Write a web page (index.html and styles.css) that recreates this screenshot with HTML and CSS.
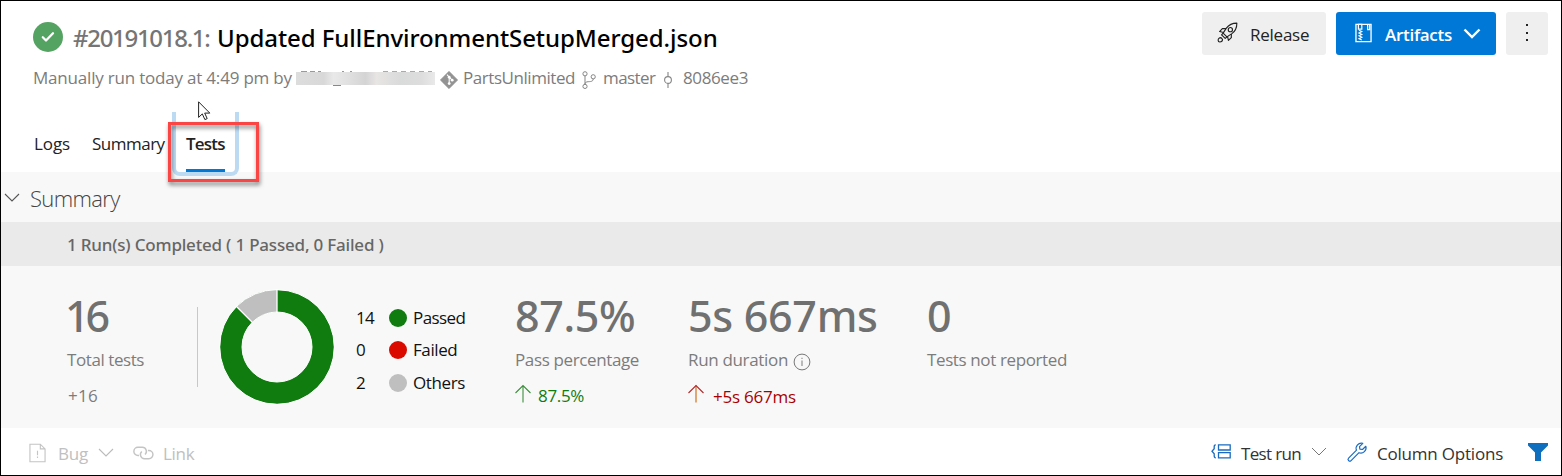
FILE: index.html
```html
<!DOCTYPE html>
<html lang="en">
<head>
<meta charset="utf-8">
<title>Pipeline run - Tests</title>
<link rel="stylesheet" href="styles.css">
</head>
<body>
<header class="header">
  <div class="run">
    <div class="title-row">
      <svg class="status" viewBox="0 0 30 30"><circle cx="15" cy="15" r="15" fill="#55a362"/><path d="M9.800 15.300l3.200 3.200 7-7.200" fill="none" stroke="#fff" stroke-width="2.300" stroke-linecap="round" stroke-linejoin="round"/></svg>
      <h1 class="title"><span class="run-id">#20191018.1:</span><span class="run-name">Updated FullEnvironmentSetupMerged.json</span></h1>
    </div>
    <div class="meta">
      <span class="meta-by">Manually run today at 4:49 pm by</span>
      <span class="redacted"></span>
      <svg class="ico-git" viewBox="0 0 18 18"><path d="M9 .3L17.7 9 9 17.7.3 9z" fill="#939393" stroke="#939393" stroke-linejoin="round" stroke-width=".6"/><path d="M7 3.6l2.2 2.6v6.6M9.2 6.2l3 3" fill="none" stroke="#fff" stroke-width="1.1"/><circle cx="9.2" cy="6.2" r="1.4" fill="#fff"/><circle cx="9.2" cy="12.6" r="1.4" fill="#fff"/><circle cx="12.2" cy="9.2" r="1.4" fill="#fff"/></svg>
      <span class="meta-repo">PartsUnlimited</span>
      <svg class="ico-branch" viewBox="0 0 14 18"><g fill="none" stroke="#858585" stroke-width="1"><circle cx="3" cy="2.8" r="2.1"/><circle cx="3" cy="15.4" r="2.1"/><circle cx="11.2" cy="5.8" r="2.1"/><path d="M3 4.9v8.4M11.2 7.9c0 3-3.2 2.6-5.2 2.8-2 .2-3 .8-3 2.6"/></g></svg>
      <span class="meta-branch">master</span>
      <svg class="ico-commit" viewBox="0 0 10 18"><g fill="none" stroke="#858585" stroke-width="1.1"><circle cx="5" cy="9" r="3.4"/><path d="M5 1v4.600M5 12.400V17"/></g></svg>
      <span class="meta-commit">8086ee3</span>
    </div>
  </div>
  <div class="actions">
    <button class="btn btn-release">
      <svg class="ico-rocket" viewBox="0 0 22 22"><g fill="none" stroke="#222" stroke-width="1.2" stroke-linejoin="round"><path d="M20.800 1.200c-4.400 0-8.300 1.600-11 5.200L6.400 11.600l4 4 5.200-3.400c3.600-2.700 5.200-6.600 5.200-11z"/><circle cx="14" cy="8" r="2.200"/><path d="M9.400 7H5.600L2.700 10l4.200 1M15 12.600v3.800L12 19.300l-1-4.200M6.400 11.600l-1.600 1.800 3.800 3.800 1.800-1.600"/><path d="M4.200 16.400c-2 0-3 1.200-3 2.700 0 1 .6 1.800 1.700 1.800 1.700 0 2.900-1 2.900-2.800z"/></g></svg>
      <span class="release-label">Release</span>
    </button>
    <button class="btn btn-artifacts">
      <svg class="ico-zip" viewBox="0 0 18 20"><path d="M1 .8h16v18.400H1z" fill="none" stroke="#fff" stroke-width="1.400"/><path d="M3.600.8h3.600v5H3.600zM13.400 1v5.500h2.200V1" fill="none" stroke="#fff" stroke-width="1.300"/><path d="M4.200 7l3 1.500-3 1.500 3 1.500-3 1.500 3 1.500-3 1.500 3 1.500" fill="none" stroke="#fff" stroke-width="1.200"/></svg>
      <span class="artifacts-label">Artifacts</span>
      <svg class="ico-chev" viewBox="0 0 18 12"><path d="M1.500 1.500L9 9l7.500-7.500" fill="none" stroke="#fff" stroke-width="2.400"/></svg>
    </button>
    <button class="btn btn-more"><svg class="ico-more" viewBox="0 0 4 20"><path d="M1 2h2v2H1zM1 10h2v2H1zM1 17h2v2H1z" fill="#222"/></svg></button>
  </div>
</header>
<nav class="tabs">
  <span class="tab tab-logs">Logs</span>
  <span class="tab tab-summary">Summary</span>
  <span class="tab tab-tests">Tests<i class="focus-ring"></i><i class="callout"></i></span>
</nav>
<main>
  <section class="summary-head">
    <svg class="ico-collapse" viewBox="0 0 16 10"><path d="M1 1l7 7 7-7" fill="none" stroke="#555" stroke-width="1.100"/></svg>
    <h2 class="summary-title">Summary</h2>
  </section>
  <section class="completed"><span class="completed-text">1 Run(s) Completed ( 1 Passed, 0 Failed )</span></section>
  <section class="stats">
    <div class="stat stat-total">
      <div class="num num-total">16</div>
      <div class="label label-total">Total tests</div>
      <div class="delta delta-total">+16</div>
    </div>
    <div class="divider"></div>
    <svg class="donut" viewBox="-58 -58 116 116">
      <circle r="46" fill="none" stroke="#107c10" stroke-width="22"/>
      <path d="M0 -46A46 46 0 0 0 -32.530 -32.530" fill="none" stroke="#bfbfbf" stroke-width="22"/>
      <path d="M0 -58V-34M-41 -41L-24 -24" stroke="#fff" stroke-width="1.300"/>
      <circle r="35" fill="none" stroke="#fff" stroke-width="1"/><circle r="57.300" fill="none" stroke="#fff" stroke-width="1"/>
    </svg>
    <div class="legend">
      <span class="count count-passed">14</span><i class="dot passed"></i><span class="leg-passed">Passed</span>
      <span class="count">0</span><i class="dot failed"></i><span class="leg-failed">Failed</span>
      <span class="count">2</span><i class="dot others"></i><span class="leg-others">Others</span>
    </div>
    <div class="stat">
      <div class="num num-pass">87.5%</div>
      <div class="label label-pass">Pass percentage</div>
      <div class="delta good"><svg class="arrow" viewBox="0 0 18 20"><path d="M9 18.500V1.500M1.500 9L9 1.500 16.500 9" fill="none" stroke="#3d8f3d" stroke-width="1.100"/></svg><span class="delta-pass">87.5%</span></div>
    </div>
    <div class="stat">
      <div class="num num-dur">5s 667ms</div>
      <div class="label"><span class="label-dur">Run duration</span><svg class="ico-info" viewBox="0 0 18 18"><circle cx="9" cy="9" r="7.900" fill="none" stroke="#777" stroke-width="1"/><path d="M9 7.500v5.500M9 4.800v1.300" stroke="#888" stroke-width="1.100"/></svg></div>
      <div class="delta bad"><svg class="arrow" viewBox="0 0 18 20"><path d="M9 18.500V1.500" stroke="#d0701c" stroke-width="1.200"/><path d="M1.500 9L9 1.500 16.500 9" fill="none" stroke="#b02a2a" stroke-width="1.100"/></svg><span class="delta-dur">+5s 667ms</span></div>
    </div>
    <div class="stat">
      <div class="num">0</div>
      <div class="label label-not">Tests not reported</div>
    </div>
  </section>
</main>
<footer class="toolbar">
  <svg class="ico-bug" viewBox="0 0 18 20"><path d="M1 .7h11l5 5v13.600H1zM12 .7v5h5" fill="none" stroke="#c4c4c4" stroke-width="1.200"/><path d="M9 7.500v5M9 13.700v1.500" stroke="#c4c4c4" stroke-width="1.200"/></svg>
  <span class="bug">Bug</span>
  <svg class="ico-down down-bug" viewBox="0 0 16 10"><path d="M1 1l7 7 7-7" fill="none" stroke="#bbb" stroke-width="1.100"/></svg>
  <svg class="ico-link" viewBox="0 0 22 14"><g fill="none" stroke="#c4c4c4" stroke-width="1.500"><path d="M6.300 9.600H5.200a4.300 4.300 0 0 1 0-8.600h4.600a4.300 4.300 0 0 1 2.800 7.500"/><path d="M15.600 4.400h1a4.300 4.300 0 0 1 0 8.600H12a4.300 4.300 0 0 1-2.800-7.500"/></g></svg>
  <span class="link">Link</span>
  <span class="spacer"></span>
  <svg class="ico-group" viewBox="0 0 20 15"><g fill="none" stroke="#1a6bc0" stroke-width="1.300"><path d="M7.500.8h11.700v5.200H7.500zM7.500 8.700h11.700v5.200H7.500zM4.800.8C3.400.8 3.200 1.500 3.200 2.800v2L1 7.300l2.200 2.500v2c0 1.300.2 2 1.600 2"/></g></svg>
  <span class="testrun">Test run</span>
  <svg class="ico-down down-run" viewBox="0 0 16 10"><path d="M1 1l7 7 7-7" fill="none" stroke="#777" stroke-width="1"/></svg>
  <svg class="ico-wrench" viewBox="0 0 20 20"><path d="M15.800 1.300a5.200 5.200 0 0 0-6.300 6.900l-7.900 7.900a1.750 1.750 0 0 0 2.500 2.500l7.900-7.900a5.200 5.200 0 0 0 6.800-6.400l-3.300 3.200-2.600-.3-.4-2.600z" fill="none" stroke="#1a6bc0" stroke-width="1.200" stroke-linejoin="round"/></svg>
  <span class="columns">Column Options</span>
  <svg class="ico-filter" viewBox="0 0 20 18"><path d="M0 0h20v2.500l-7 7V18H7V9.500l-7-7z" fill="#106ebe"/></svg>
</footer>
<svg class="cursor" viewBox="0 0 13 20"><path d="M.6.8v15.600l3.700-3.500 2.600 5.700 2.300-1-2.500-5.500h5.100z" fill="#fff" stroke="#222" stroke-width="1"/></svg>
</body>
</html>
```
FILE: styles.css
```css
* { box-sizing: border-box; }
body {
  margin: 0;
  width: 1562px;
  height: 476px;
  border: 1px solid #000;
  background: #fff;
  color: #222;
  font: 400 17px/24px "Open Sans", "Noto Sans", sans-serif;
  white-space: nowrap;
  position: relative;
  overflow: hidden;
}
svg { display: block; flex: none; overflow: visible; }
h1, h2 { margin: 0; }

.header { display: flex; justify-content: space-between; height: 111px; padding: 11px 13px 0 32px; }
.title-row { display: flex; height: 50px; padding-top: 10px; }
.status { width: 30px; height: 30px; margin-right: 10px; }
.title { display: flex; font-family: "Noto Sans", "Open Sans", sans-serif; font-size: 24px; line-height: 32px; }
.run-id { width: 144px; font-weight: 500; color: #757575; letter-spacing: -1.3px; }
.run-name { font-weight: 500; color: #000; letter-spacing: -.07px; }
.meta { display: flex; align-items: center; height: 32px; color: #7c7c7c; }
.meta-by { width: 263px; letter-spacing: -.2px; }
.redacted {
  width: 139px;
  height: 15px;
  margin: 1px 5px 0 0;
  background:
    linear-gradient(#888, #888) 37px 14px / 8px 1px no-repeat,
    linear-gradient(90deg, #999 6px, transparent 6px 9px, #999 9px 14px, transparent 14px 17px, #999 17px 20px, transparent 20px) 5px 0 / 30px 1px no-repeat,
    linear-gradient(90deg, #999 2px, transparent 2px 8px, #999 8px 10px, transparent 10px) 46px 0 / 20px 1px no-repeat,
    repeating-linear-gradient(90deg, #aaa 0 5px, transparent 5px 9px) 87px 0 / 49px 1px no-repeat,
    linear-gradient(90deg, #ddd, #d8d8d8 20%, #e9e9e9 27%, #dedede 40%, #d4d4d4 50%, #e8e5e4 58%, #d9dada 75%, #ddd 90%, #e9e9e9) 0 1px / 139px 13px no-repeat;
}
.ico-git { width: 18px; height: 18px; margin: 3px 5px 0 0; }
.meta-repo { width: 119px; letter-spacing: -.44px; }
.ico-branch { width: 14px; height: 18px; margin: 3px 7px 0 0; }
.meta-branch { width: 60px; letter-spacing: -.6px; }
.ico-commit { width: 10px; height: 18px; margin: 3px 10px 0 0; }
.meta-commit { letter-spacing: -.38px; }

.actions { display: flex; gap: 10px; height: 43px; }
.btn { display: flex; align-items: center; height: 43px; padding: 0; border: 0; border-radius: 3px; background: #efefef; color: #222; font: inherit; }
.btn-release { width: 124px; padding-left: 15px; }
.ico-rocket { width: 21px; height: 21px; margin: 0 12px 2px 0; }
.release-label { letter-spacing: -.25px; padding-top: 2px; }
.btn-artifacts { width: 160px; padding-left: 19px; background: #0078d7; color: #fff; font-weight: 600; }
.ico-zip { width: 17px; height: 20px; margin: 0 13px 1px 0; }
.artifacts-label { width: 78px; text-align: left; letter-spacing: -.28px; padding-top: 2px; }
.ico-chev { width: 18px; height: 12px; }
.btn-more { width: 42px; justify-content: center; }
.ico-more { width: 4px; height: 20px; margin-bottom: 3px; }

.tabs { display: flex; height: 60px; padding-left: 33px; color: #222; }
.tab { height: 60px; padding-top: 20px; }
.tab-logs { width: 58px; letter-spacing: -.1px; }
.tab-summary { width: 94px; letter-spacing: -.5px; }
.tab-tests { position: relative; width: 39px; border-bottom: 3px solid #0078d7; font-weight: 600; letter-spacing: -.8px; }
.focus-ring { position: absolute; left: -14px; top: 0; width: 67px; height: 64px; border: 4px solid #bcdaf2; border-top: 0; border-radius: 0 0 8px 8px; }
.callout { position: absolute; left: -18px; top: 10px; width: 91px; height: 60px; border: 3px solid #fb4545; filter: drop-shadow(1px 3px 2px rgba(0, 0, 0, .5)); }

.summary-head { display: flex; align-items: center; height: 50px; padding: 2px 0 0 3px; background: #f8f8f8; }
.ico-collapse { width: 16px; height: 10px; margin-right: 10px; }
.summary-title { color: #444; font-size: 22px; font-weight: 300; letter-spacing: -.65px; }
.completed { display: flex; align-items: center; height: 44px; padding: 2px 0 0 66px; background: #eaeaea; color: #666; font-family: "Noto Sans", "Open Sans", sans-serif; font-weight: 500; }
.completed-text { letter-spacing: -.2px; }

.stats { display: flex; height: 162px; padding-left: 66px; background: #f8f8f8; color: #7c7c7c; }
.stat { width: 239px; padding-top: 22px; }
.stat-total { width: 130px; }
.legend + .stat { width: 173px; }
.num { height: 60px; color: #707070; font-family: "Noto Sans", "Open Sans", sans-serif; font-size: 43px; font-weight: 500; line-height: 56px; }
.num-total { margin-left: -2px; letter-spacing: -4px; }
.num-pass { letter-spacing: -.38px; }
.num-dur { letter-spacing: -.3px; }
.label { display: flex; align-items: center; height: 24px; }
.label-total { letter-spacing: -.42px; }
.label-pass { letter-spacing: -.37px; }
.label-dur { width: 105px; letter-spacing: -.33px; }
.label-not { letter-spacing: -.38px; }
.ico-info { width: 18px; height: 18px; margin-top: 3px; }
.delta { display: flex; align-items: center; height: 48px; }
.delta-total { padding-left: 1px; letter-spacing: .28px; }
.arrow { width: 18px; height: 20px; margin: 0 6px 4px -1px; }
.good { color: #107c10; }
.bad { color: #a80000; }
.delta-pass { letter-spacing: -.34px; }
.delta-dur { padding: 1px 0 0 2px; letter-spacing: -.22px; }
.divider { width: 1px; height: 80px; margin: 41px 21px 0 0; background: #c8c8c8; }
.donut { width: 116px; height: 116px; margin: 23px 21px 0 0; }
.legend { display: grid; grid-template-columns: 33px 24px 102px; grid-template-rows: 33px 32px 33px; align-items: center; align-content: start; width: 159px; padding-top: 35px; color: #111; }
.count-passed { letter-spacing: -.6px; }
.dot { width: 18px; height: 18px; border-radius: 50%; }
.passed { background: #107c10; }
.failed { background: #da0a00; }
.others { background: #bfbfbf; }
.leg-passed { letter-spacing: -.6px; }
.leg-failed { letter-spacing: -.4px; }
.leg-others { letter-spacing: -.38px; }

.toolbar { display: flex; align-items: center; height: 47px; padding: 3px 13px 0 28px; color: #333; }
.ico-bug { width: 17px; height: 20px; margin-right: 12px; }
.bug { width: 40px; padding-top: 1px; color: #c0c0c0; letter-spacing: -.2px; }
.ico-down { width: 16px; height: 10px; }
.down-bug { margin-right: 19px; }
.ico-link { width: 21px; height: 14px; margin-right: 9px; }
.link { padding-top: 1px; color: #c0c0c0; letter-spacing: -.3px; }
.spacer { flex: 1; }
.ico-group { width: 20px; height: 15px; margin: 0 10px 3px 0; }
.testrun { width: 70px; padding-top: 1px; letter-spacing: -.66px; }
.down-run { margin: 0 20px 2px 0; }
.ico-wrench { width: 20px; height: 20px; margin: 0 10px 2px 0; }
.columns { width: 151px; padding-top: 1px; letter-spacing: -.21px; }
.ico-filter { width: 20px; height: 18px; margin-bottom: 2px; }

.cursor { position: absolute; left: 197px; top: 100px; width: 13px; height: 20px; }
```
